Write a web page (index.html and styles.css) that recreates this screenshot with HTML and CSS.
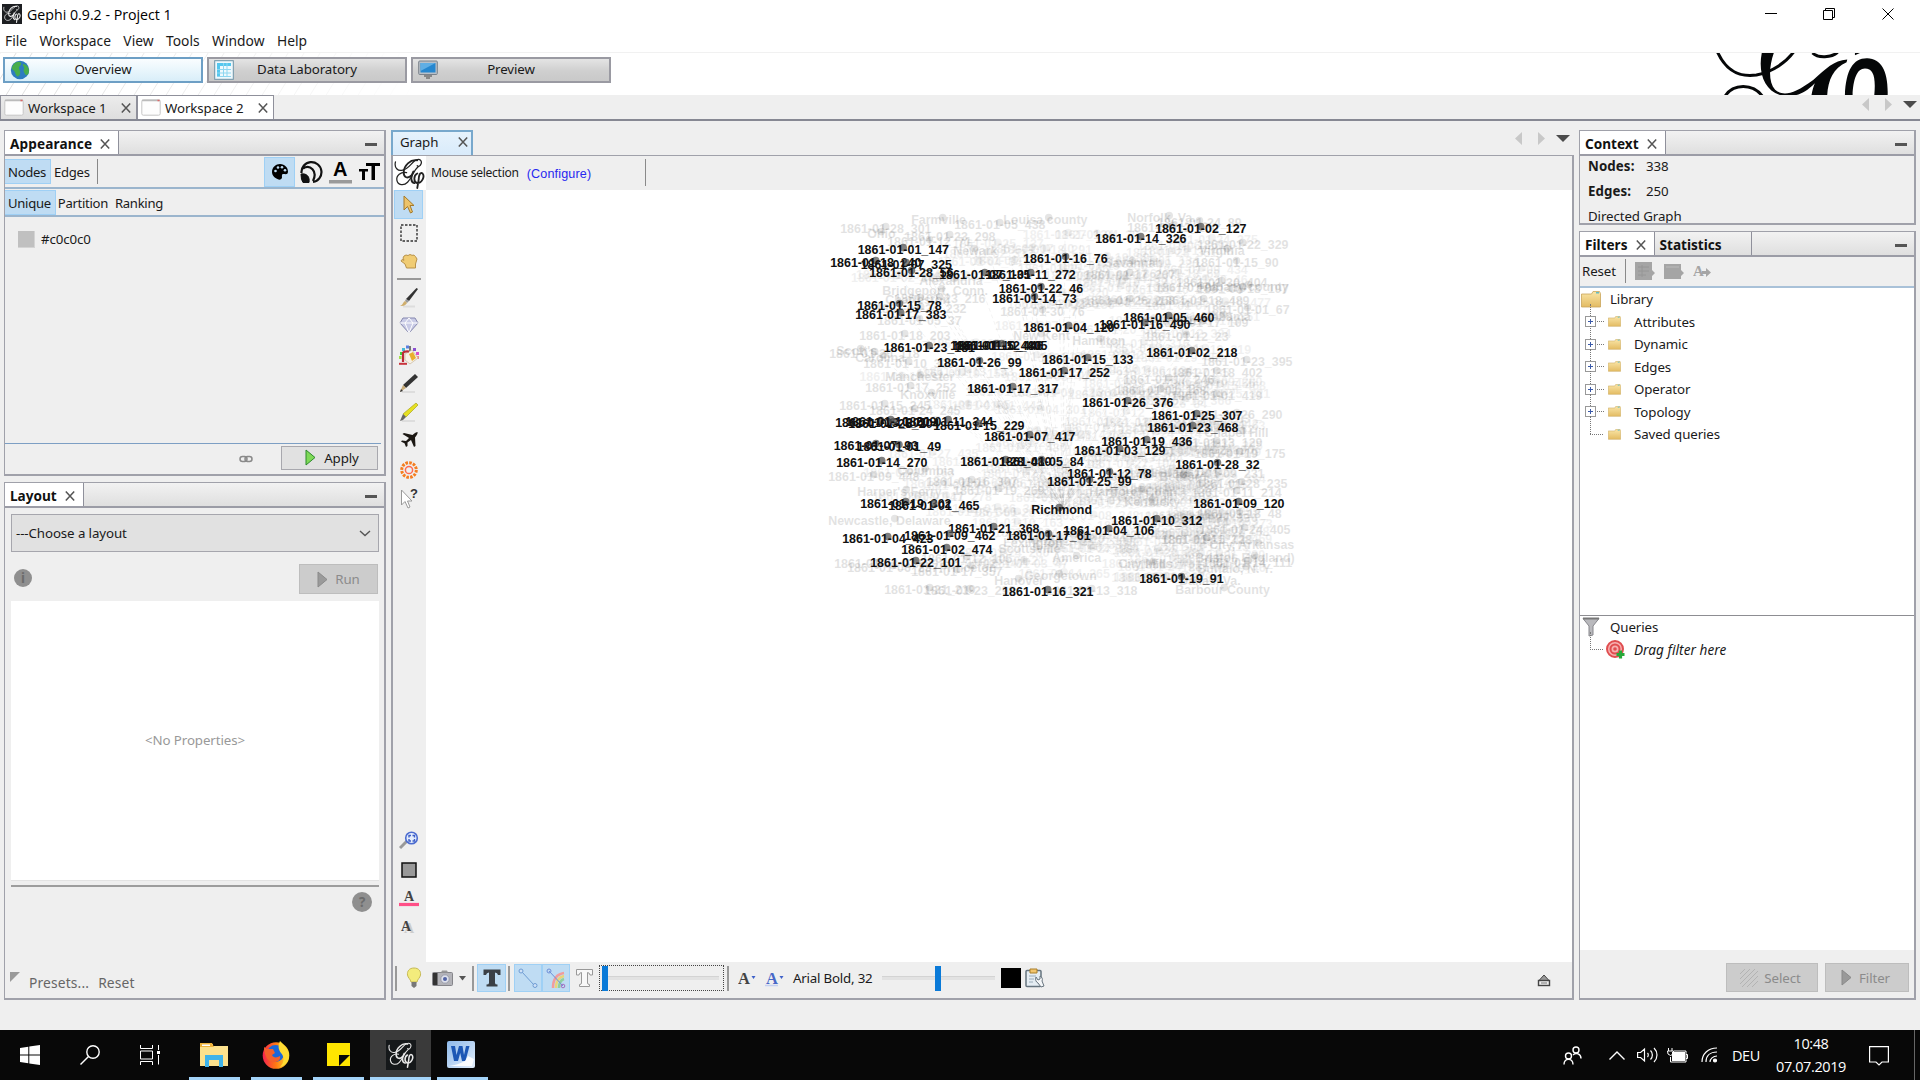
FILE: index.html
```html
<!DOCTYPE html>
<html lang="en">
<head>
<meta charset="utf-8">
<title>Gephi 0.9.2 - Project 1</title>
<link rel="stylesheet" href="styles.css">
</head>
<body>
<svg class="defs" aria-hidden="true">
  <defs>
    <linearGradient id="gold" x1="0" y1="0" x2="0" y2="1"><stop offset="0" stop-color="#fae6a8"/><stop offset="1" stop-color="#e3bb62"/></linearGradient>
    <linearGradient id="ff" x1="0" y1="0" x2="1" y2="0"><stop offset="0" stop-color="#f5214f"/><stop offset=".5" stop-color="#ff7a12"/><stop offset="1" stop-color="#ffe030"/></linearGradient>
    <linearGradient id="word" x1="0" y1="0" x2="1" y2="1"><stop offset="0" stop-color="#8db9ea"/><stop offset="1" stop-color="#e4effb"/></linearGradient>
    <symbol id="gephi" viewBox="0 0 32 32">
      <g fill="none" stroke="currentColor" stroke-linecap="round">
        <path stroke-width="1.3" d="M1.500 4C0 10 4 14 9 12.500C16 11 18 4 23 2C27 .5 29 3 28 6C27 9 25 9 24 8"/>
        <path stroke-width="1.9" d="M24 2.500C17 1 10 8 10 15C10 20 14 22 18 18"/>
        <path stroke-width="1.3" d="M13 15C7 14 2 18 3 23C4 28 10 29 14 25C19 20 20 13 25 9"/>
        <path stroke-width="1.900" d="M20 14C17 19 17 25 21 26"/>
        <path stroke-width="1.900" d="M24 16C20 18 20 25 24 26C29 26 32 19 29.500 16C27 14 25.500 18 25.500 22L24 31"/>
      </g>
    </symbol>
    <symbol id="close" viewBox="0 0 10 10"><path d="M.8.5 9.2 9.5M9.2.5.8 9.5" stroke="#555" stroke-width="1.5"/></symbol>
    <symbol id="folder" viewBox="0 0 20 17"><path d="M.5 3h10l1.500-2.500h6.500l1 2V16H.5z" fill="url(#gold)" stroke="#c9a55a" stroke-width=".8"/><path d="M15 1.800h3" stroke="#4bb5c9" stroke-width="1.300"/></symbol>
    <symbol id="win" viewBox="0 0 20 17"><rect x=".8" y=".8" width="18.400" height="15.400" rx="1.500" fill="#fdfdfd" stroke="#c6c6c6"/><path d="M1 1.500h18" stroke="#bbb" stroke-width="1.500"/><path d="M16.500 1.500h2" stroke="#d66" stroke-width="1.500"/></symbol>
    <symbol id="play" viewBox="0 0 11 17"><path d="M1 1 10 8.500 1 16z"/></symbol>
  </defs>
</svg>

<header class="titlebar">
  <span class="app-icon"><svg width="18" height="18"><use href="#gephi"/></svg></span>
  <span class="title">Gephi 0.9.2 - Project 1</span>
  <svg class="winctl" width="132" height="14" viewBox="0 0 132 14" fill="none" stroke="#000"><path d="M0 5.500h12M58.500 2.500h9v9h-9zM60.500 2.500v-2h9v9h-2M117.500.5l11 11M128.500.5l-11 11"/></svg>
</header>
<nav class="menu"><span>File</span><span>Workspace</span><span>View</span><span>Tools</span><span>Window</span><span>Help</span></nav>
<div class="banner">
  <svg class="hatch" width="420" height="42"><defs><pattern id="h" width="16" height="26" patternUnits="userSpaceOnUse"><path d="M-2 29 18-3M-10 16 2-3M14 29 18 23" stroke="#dedede" fill="none"/></pattern><linearGradient id="fade"><stop offset="0" stop-color="#fff" stop-opacity="0"/><stop offset="1" stop-color="#fff"/></linearGradient></defs><rect width="420" height="42" fill="url(#h)"/><rect width="420" height="42" fill="url(#fade)"/></svg>
  <div class="modes">
    <div class="mode on"><svg width="20" height="20" viewBox="0 0 20 20"><circle cx="10" cy="10" r="9.200" fill="#2e7cc0"/><path d="M3 5c3-4 7-4 8-2s-2 3-2 5 2 3 1 6-3 3-4 1-1-4-3-5-1-3 0-5zM13 4c3 0 6 3 6 7s-3 5-4 3-2-3-1-5-2-3-1-5z" fill="#48ad4d"/></svg><b>Overview</b></div>
    <div class="mode"><svg width="20" height="20" viewBox="0 0 20 20"><rect x=".7" y=".7" width="18.600" height="18.600" fill="#eef9fd" stroke="#6e93a5"/><path d="M3 3h14v3H3zM3 6h3v11H3z" fill="#54c7ee"/><path d="M3 9.500h14M3 13h14M3 16.500h14M9.500 3v14M13 3v14" stroke="#8dd6f0"/></svg><b>Data Laboratory</b></div>
    <div class="mode"><svg width="20" height="20" viewBox="0 0 20 20"><rect x=".7" y="1" width="18.600" height="13.500" rx="1" fill="#b9c0c8" stroke="#7a828b"/><rect x="2.500" y="3" width="15" height="9.500" fill="#2687cf"/><path d="M2.500 3h15l-15 8z" fill="#60aee4"/><path d="M6 15h8v2h-2v2H8v-2H6z" fill="#888"/></svg><b>Preview</b></div>
  </div>
  <svg class="brand" width="177" height="43" viewBox="520 158 530 128" preserveAspectRatio="none" fill="#050708"><g fill="none" stroke="#050708" stroke-width="9"><path d="M533 154C560 215 600 232 650 225C700 215 740 185 762 154M556 290C580 250 640 250 668 290M818 158C835 175 875 172 893 156"/></g><path d="M666 158H702C688 200 685 245 706 270C730 290 760 285 820 240C860 205 880 182 922 178L920 186C880 204 865 240 862 286H815C818 270 820 262 825 250C790 285 765 292 735 286H720C672 270 655 215 666 158ZM945 158h15l-15 7zM915 286C918 210 940 173 982 174C1025 175 1045 215 1043 286H1003C1008 230 1000 205 975 205C950 205 940 240 938 286Z"/></svg>
</div>
<div class="wtabs">
  <div class="wtab"><svg width="20" height="17"><use href="#win"/></svg><span>Workspace 1</span><svg class="x" width="10" height="10"><use href="#close"/></svg></div>
  <div class="wtab on"><svg width="20" height="17"><use href="#win"/></svg><span>Workspace 2</span><svg class="x" width="10" height="10"><use href="#close"/></svg></div>
  <svg class="arrows" width="56" height="14" viewBox="0 0 56 14"><path d="M7 0v13L0 6.500zM23 0v13l7-6.500z" fill="#c8c8c8"/><path d="M41 3h14l-7 7z" fill="#4b4b4b"/></svg>
</div>

<main class="desk">
  <div class="left">
    <section class="panel appearance">
      <div class="ptitle"><div class="ptab wide">Appearance<svg width="10" height="10"><use href="#close"/></svg></div><i></i></div>
      <div class="arow first"><span class="sel">Nodes</span><span>Edges</span><em></em>
        <div class="aicons">
          <span class="sel"><svg width="18" height="18" viewBox="0 0 18 18"><path d="M9 1C14 1 17 5 17 8.500S14.500 11 12.500 11 11 13 11 14.500 9 17 7.500 16.500C3 15 1 12 1 9 1 4 5 1 9 1z"/><g fill="#bfdcf3"><circle cx="4.500" cy="8" r="1.300"/><circle cx="7" cy="4.500" r="1.300"/><circle cx="11" cy="4.300" r="1.300"/><circle cx="14" cy="7.300" r="1.300"/></g></svg></span>
          <svg width="24" height="24" viewBox="0 0 24 24" fill="none" stroke="#111"><path stroke-width="2.200" d="M2.500 13A10 10 0 1 1 14 22M4 8.500C11 4 19 11 14 21"/><path d="M2 14c6-1 9 3 8 8.500H4Q2 20 2 14z" fill="#111"/></svg>
          <svg width="24" height="24" viewBox="0 0 24 24"><text x="4" y="16" font-size="20" font-weight="700">A</text><path d="M0 20h23v3.500H0z" fill="#9a9a9a"/></svg>
          <svg width="22" height="20" viewBox="0 0 22 20"><path d="M0 7h9v2.600H6V18H3V9.600H0zM7 1h14v3h-5v14h-3.500V4H7z"/></svg>
        </div>
      </div>
      <div class="arow second"><span class="sel">Unique</span><span>Partition</span><span>Ranking</span></div>
      <div class="swatch"><i></i>#c0c0c0</div>
      <div class="applybar"><svg width="14" height="8" viewBox="0 0 14 8" fill="none" stroke="#8a8a8a" stroke-width="1.500"><rect x="1" y="1.500" width="7" height="5" rx="2.500"/><rect x="6" y="1.500" width="7" height="5" rx="2.500"/></svg><div class="btn apply"><svg width="11" height="17" fill="#7ed957" stroke="#2b8a2b"><use href="#play"/></svg>Apply</div></div>
    </section>
    <section class="panel layout">
      <div class="ptitle"><div class="ptab">Layout<svg width="10" height="10"><use href="#close"/></svg></div><i></i></div>
      <div class="combo">---Choose a layout<svg width="12" height="7" fill="none" stroke="#555" stroke-width="1.400"><path d="M1 1l5 4.500L11 1"/></svg></div>
      <div class="runrow"><span class="round">i</span><div class="btn off run"><svg width="11" height="17" fill="#9a9a9a" stroke="#8a8a8a"><use href="#play"/></svg>Run</div></div>
      <div class="props">&lt;No Properties&gt;</div>
      <div class="helprow"><span class="round big">?</span></div>
      <div class="presets"><svg width="10" height="10"><path d="M0 0h10L0 10z" fill="#999"/></svg><span>Presets...</span><span>Reset</span></div>
    </section>
  </div>

  <section class="graph">
    <div class="gtabs"><div class="gtab">Graph<svg width="10" height="10"><use href="#close"/></svg></div><svg class="arrows" width="56" height="14" viewBox="0 0 56 14"><path d="M7 0v13L0 6.500zM23 0v13l7-6.500z" fill="#c8c8c8"/><path d="M41 3h14l-7 7z" fill="#4b4b4b"/></svg></div>
    <div class="gbody">
      <div class="gtop"><span class="glogo"><svg width="31" height="31"><use href="#gephi"/></svg></span><span class="ms">Mouse selection</span><span class="conf">(Configure)</span><em></em></div>
      <div class="tools">
        <div class="t selt"><svg width="14" height="19" viewBox="0 0 14 19"><path d="M2 1v14l3.500-3.500L8.500 18l2-1L8 10.500h4z" fill="#ecc36a" stroke="#a57a2a"/></svg></div>
        <div class="t"><svg width="18" height="18"><rect x="1" y="1" width="16" height="16" fill="none" stroke="#333" stroke-width="1.400" stroke-dasharray="2.500 1.500"/></svg></div>
        <div class="t"><svg width="18" height="15" viewBox="0 0 18 15"><path d="M3 4l1-2 2-1 2 .5 2-1 2 .8 2-.2 1.500 1.500L17 5l-1.500 5v4h-9L5 10 1 7l1-1.500 2 .8z" fill="#f0cc74" stroke="#b8924a"/></svg></div>
        <hr>
        <div class="t"><svg width="20" height="21" viewBox="0 0 20 21"><path d="M4 19.500h12" stroke="#ddd" stroke-width="2"/><path d="M17.500 1 19 2 10 14 7 12z" fill="#333"/><path d="M7 12l3 2-2 2-2-2z" fill="#999"/><path d="M6 14l2 2c-2 3-4 3-7 3 3-1 3-4 5-5z" fill="#cfae6d"/></svg></div>
        <div class="t"><svg width="20" height="18" viewBox="0 0 20 18"><path d="M4 1h12l3 5-9 10L1 6z" fill="#c9cbe6" stroke="#8587ae"/><path d="M1 6h18M6 6l4 10 4-10-4-5z" fill="none" stroke="#fff"/></svg></div>
        <div class="t"><svg width="20" height="20" viewBox="0 0 20 20"><g stroke="none"><rect x="1" y="7" width="3" height="3" fill="#3fd23f"/><rect x="3" y="3" width="3" height="3" fill="#46b9d8"/><rect x="7" y=".5" width="3" height="3" fill="#5a7fe0"/><rect x="14" y="3" width="3" height="3" fill="#8a4fd0"/><rect x="17" y="7" width="3" height="3" fill="#d94fc8"/><rect x="17" y="11" width="3" height="3" fill="#f08a8a"/><rect x="0" y="11" width="2.500" height="3" fill="#a6e04a"/></g><path d="M11 1v6" stroke="#777" stroke-width="2"/><path d="M6 9l7-4 6 8-8 6-5-4z" fill="#f7f1e6" stroke="#c9b79b" stroke-width=".7"/><path d="M10 9l4-2 3 6-4 3z" fill="#e9ae2e"/><path d="M4 17V8q1-2 6-1.500" stroke="#bb2b36" stroke-width="2.200" fill="none"/><path d="M0 18.800h8" stroke="#c8343c" stroke-width="2"/></svg></div>
        <div class="t"><svg width="20" height="20" viewBox="0 0 20 20"><path d="M3 19h13" stroke="#ddd" stroke-width="2"/><path d="M16 1l3 3L7 15l-3-3z" fill="#333"/><path d="M4 12l3 3-6 4z" fill="#c8ab76"/><path d="M1 19l1-3 2 2z" fill="#333"/></svg></div>
        <div class="t"><svg width="20" height="20" viewBox="0 0 20 20"><path d="M3 19h13" stroke="#ddd" stroke-width="2"/><path d="M17 1l2 2L7 15l-3-3z" fill="#e6e022" stroke="#a9a51f" stroke-width=".7"/><path d="M4 12l3 3-3 3-3 1z" fill="#666"/></svg></div>
        <div class="t"><svg width="18" height="17" viewBox="0 0 18 17"><path d="M17.500 0c-1 0-3 1-5 3L4 1 2.500 2 9 6 6 9 2 8.500 1 9.500l3.500 1.700L6 15l1.500-1V10.500L11 8l3 7 1.500-1L15 5.500C17 3 18 1 17.500 0z" fill="#1b1713"/></svg></div>
        <div class="t"><svg width="18" height="18" viewBox="0 0 18 18" fill="none"><circle cx="9" cy="9" r="7.300" stroke="#f57d20" stroke-width="3" stroke-dasharray="2.600 1.220"/><circle cx="9" cy="9" r="3.600" stroke="#ff6a50" stroke-width="1.500"/></svg></div>
        <div class="t"><svg width="18" height="21" viewBox="0 0 18 21"><path d="M1.500 2v15l3.500-3.500L8 20l2-1-2.500-6H12z" fill="#fff" stroke="#999"/><text x="10" y="10" font-size="13" font-weight="700" fill="#333">?</text></svg></div>
        <div class="gap"></div>
        <div class="t"><svg width="20" height="19" viewBox="0 0 20 19"><path d="M1 17l7-7" stroke="#999" stroke-width="3"/><circle cx="12.500" cy="7" r="5.800" fill="#e4edfb" stroke="#4c6cd0" stroke-width="1.600"/><path d="M10 6.500V4.500h2M13.500 4.500h2v2M15.500 8v2h-2M12 10h-2V8" fill="none" stroke="#3d5ec9" stroke-width="1.400"/></svg></div>
        <div class="t"><svg width="16" height="16"><rect x="1" y="1" width="14" height="14" fill="#999" stroke="#111" stroke-width="1.500"/></svg></div>
        <div class="t"><svg width="20" height="18" viewBox="0 0 20 18"><text class="serif" x="5" y="11.500" font-size="14" font-weight="700" fill="#444">A</text><path d="M0 15.500h20" stroke="#ff4f87" stroke-width="3.200"/></svg></div>
        <div class="t"><svg width="20" height="16" viewBox="0 0 20 16"><text class="serif" x="5" y="13.500" font-size="14" font-weight="700" fill="#ccc">A</text><text class="serif" x="2" y="12" font-size="14" font-weight="700" fill="#444">A</text></svg></div>
      </div>
      <svg class="canvas" id="canvas" width="1146" height="772" viewBox="426 190 1146 772"></svg>
      <div class="gbot">
        <em></em>
        <svg class="bulb" width="16" height="22" viewBox="0 0 16 22"><path d="M8 1C3 1 1 4.500 1.500 8c.5 3 3 4 3.500 7h6c.5-3 3-4 3.500-7C15 4.500 13 1 8 1z" fill="#f3ec7c" stroke="#c6b955"/><path d="M5.500 15h5v4L8 21l-2.500-2z" fill="#777"/></svg>
        <svg class="cam" width="21" height="16" viewBox="0 0 21 16"><rect x=".5" y="2.500" width="20" height="13" rx="1" fill="#b3b3b8" stroke="#85858a"/><rect x="1" y="3" width="4.500" height="12" fill="#333"/><path d="M9 2.500l1-2h5l1 2" fill="#999"/><circle cx="13" cy="9" r="4.200" fill="#dfe2ec" stroke="#9a9dab"/><circle cx="13" cy="9" r="2" fill="#5263a5"/></svg>
        <svg class="dd" width="7" height="5"><path d="M0 0h7L3.500 4.500z" fill="#555"/></svg>
        <em></em>
        <span class="tog t1"><svg width="20" height="20"><path d="M1.500 1.500h17V7H16q-.5-2.500-3-2.500V15q0 1.500 2.500 1.500v2h-11v-2Q7 16.500 7 15V4.500Q4.500 4.500 4 7H1.500z" fill="#3b4046"/></svg></span>
        <em></em>
        <span class="tog"><svg width="22" height="22" fill="#cfe1f7" stroke="#6f9cd3"><path d="M5 5l12 13"/><circle cx="4" cy="4" r="2"/><circle cx="18" cy="18.500" r="2"/></svg></span>
        <span class="tog t3"><svg width="22" height="22" fill="none"><path d="M8 21C8 12 12 7 19 6" stroke="#f19c9c" stroke-width="2.500"/><path d="M11 21c0-7 3-11 8-12" stroke="#e9d579" stroke-width="2.500"/><path d="M14 21c0-5 2-8 5-9" stroke="#8fd0a0" stroke-width="2.500"/><path d="M4 4l14 15" stroke="#6f8fd8"/><circle cx="4" cy="4" r="2" stroke="#6f8fd8"/><circle cx="18" cy="19" r="1.800" stroke="#a56fc0"/></svg></span>
        <svg class="to" width="19" height="20"><path d="M1.500 1.500h16V7H15q-.5-2.500-2.500-2.500V15q0 1.500 2 1.500v2h-10v-2q2 0 2-1.500V4.500Q4.500 4.500 4 7H1.500z" fill="#f8f8f8" stroke="#999"/></svg>
        <div class="slider dotted"><i></i><b></b></div>
        <em class="e4"></em>
        <svg class="a1" width="19" height="20"><text class="serif" x="0" y="16" font-size="16.500" font-weight="700" fill="#444">A</text><path d="M13.500 8h4L15.500 11z" fill="#3e61c8"/></svg>
        <svg class="a2" width="20" height="20"><text class="serif" x="1" y="16" font-size="16.500" font-weight="700" fill="#4767c7">A</text><path d="M0 17.500h13" stroke="#c3cff0" stroke-width="1.500"/><path d="M14.500 8h4L16.500 11z" fill="#3e61c8"/></svg>
        <span class="fontname">Arial Bold, 32</span>
        <div class="slider s2"><i></i><b></b></div>
        <i class="black"></i>
        <svg class="clip" width="20" height="20" viewBox="0 0 20 20"><rect x="1" y="2.500" width="15" height="16" rx="1" fill="#e5edf3" stroke="#66747f" stroke-width="1.500"/><path d="M5 1h7v4H5z" fill="#f2c56d" stroke="#a97f2b"/><path d="M4 8h7M4 11h5M4 14h4" stroke="#9aacba"/><path d="M11 9c-1 3 0 5 2 6l3 4 3-1-2-5c1-2 0-4-2-5v3l-2 1z" fill="#f4f6f8" stroke="#67747e"/></svg>
        <svg class="eject" width="14" height="13" viewBox="0 0 14 13"><path d="M2 6.500L7 1l5 5.500z" fill="#999" stroke="#444"/><rect x="1.500" y="6.500" width="11" height="5" fill="#eee" stroke="#444" stroke-width="1.400"/><path d="M4 9h6" stroke="#777"/></svg>
      </div>
    </div>
  </section>

  <div class="right">
    <section class="panel context">
      <div class="ptitle"><div class="ptab">Context<svg width="10" height="10"><use href="#close"/></svg></div><i></i></div>
      <dl><div><dt>Nodes:</dt><dd>338</dd></div><div><dt>Edges:</dt><dd>250</dd></div><div>Directed Graph</div></dl>
    </section>
    <section class="panel filters">
      <div class="ptitle"><div class="ptab">Filters<svg width="10" height="10"><use href="#close"/></svg></div><div class="ptab stat">Statistics</div><i></i></div>
      <div class="ftools"><span>Reset</span><em></em>
        <svg width="20" height="19"><path d="M0 0h17v8l3 3-3 3v4H0z" fill="#a5a5a5"/><path d="M3 5h11M3 9h11M3 13h8M7 3v12" stroke="#969696"/></svg>
        <svg width="20" height="17"><path d="M0 1h17v6l3 3-3 3v3H0z" fill="#a5a5a5"/><path d="M2 4h13" stroke="#bbb"/></svg>
        <svg width="19" height="17"><text class="serif" x="0" y="13" font-size="15" font-weight="700" fill="#a5a5a5">A</text><path d="M9 8h4V5l5 4.500L13 14v-3H9z" fill="#a5a5a5"/></svg>
      </div>
      <div class="tree">
        <div class="root"><svg width="20" height="17"><use href="#folder"/></svg>Library</div>
        <div class="node"><i class="plus"></i><svg width="13" height="11"><use href="#folder"/></svg>Attributes</div>
        <div class="node"><i class="plus"></i><svg width="13" height="11"><use href="#folder"/></svg>Dynamic</div>
        <div class="node"><i class="plus"></i><svg width="13" height="11"><use href="#folder"/></svg>Edges</div>
        <div class="node"><i class="plus"></i><svg width="13" height="11"><use href="#folder"/></svg>Operator</div>
        <div class="node"><i class="plus"></i><svg width="13" height="11"><use href="#folder"/></svg>Topology</div>
        <div class="node last"><i></i><svg width="13" height="11"><use href="#folder"/></svg>Saved queries</div>
      </div>
      <div class="queries">
        <div class="root q"><svg width="18" height="20" viewBox="0 0 18 20"><path d="M1 1.500h16L11 9v9l-4 1V9z" fill="#b9b9bd" stroke="#87878c"/><path d="M1 1.500h16" stroke="#777" stroke-width="2"/></svg>Queries</div>
        <div class="node last drag"><i></i><svg width="20" height="20" viewBox="0 0 20 20"><g fill="none" stroke="#e04e50" stroke-width="2"><circle cx="9" cy="9" r="8" fill="#f7b1b1"/><circle cx="9" cy="9" r="4.500"/></g><circle cx="9" cy="9" r="1.800" fill="#e04e50"/><path d="M14.500 10.500v8M10.500 14.500h8" stroke="#27a83a" stroke-width="3.200"/></svg>Drag filter here</div>
      </div>
      <div class="fbot"><div class="btn off selbtn"><svg width="18" height="18"><path d="M0 5l5-5M0 10L10 0M0 15L15 0M2 18L18 2M7 18L18 7M12 18l6-6" stroke="#b3b3b3"/></svg>Select</div><div class="btn off filbtn"><svg width="11" height="17" fill="#999" stroke="#8a8a8a"><use href="#play"/></svg>Filter</div></div>
    </section>
  </div>
</main>

<footer class="taskbar">
  <div class="app w"><svg width="20" height="20" fill="#fff"><path d="M0 3l8.300-1.200v7.700H0zM9.300 1.600L20 0v9.500H9.300zM0 10.500h8.300v7.700L0 17zM9.300 10.500H20V20L9.300 18.400z"/></svg></div>
  <div class="app"><svg width="20" height="20" fill="none" stroke="#fff" stroke-width="1.400"><circle cx="13" cy="7" r="6.200"/><path d="M8.500 11.500L.5 19.500"/></svg></div>
  <div class="app"><svg width="20" height="20" fill="none" stroke="#fff"><path d="M.5 0v3.500h12V0M.5 20v-3.500h12V20M.5 6h12v8H.5zM18.500 0v5M18.500 10v9.500"/><path d="M17 6h3v3h-3z" fill="#fff" stroke="none"/></svg></div>
  <div class="app run1"><svg width="28" height="24"><path d="M0 1h13v2h15v20H0z" fill="#fce18d"/><path d="M0 0h12l2 4H0z" fill="#efb33b"/><path d="M2 1.500h8v1.500H2z" fill="#fff"/><path d="M5 24V12h18v12h-4v-7H9v7z" fill="#3fb3ea"/></svg></div>
  <div class="app run1"><svg width="28" height="28"><circle cx="14" cy="14.500" r="13.300" fill="url(#ff)"/><circle cx="13.500" cy="12.500" r="8.500" fill="#1a67d8"/><path d="M2 6l3 2 6 0 2 4-3 2c1 3 5 3 8 1 1 5-4 7-8 6-5-1-8-8-8-15z" fill="#f4602a"/><path d="M18 0c4 4 9 8 9 15 0 6-5 10-9 11 5-5 4-11 1-14-3-4-3-8-1-12z" fill="#ffdc33"/></svg></div>
  <div class="app run1"><svg width="23" height="23"><path d="M0 0h23v12H12v11H0z" fill="#ffe500"/><path d="M12 23l11-11v11z" fill="#ffe500"/></svg></div>
  <div class="app run1 act"><span class="gicon"><svg width="26" height="26"><use href="#gephi"/></svg></span></div>
  <div class="app run1 wd"><svg width="28" height="27"><rect width="28" height="27" rx="2" fill="url(#word)"/><path d="M4 5h4l1.500 9L12 5h3.500l1.500 9 2-9h3.500L18.500 20H15l-1.800-8L11 20H7z" fill="#1d58b5"/><path d="M2 25q9-1 16-5l3-5 6 3-2 7z" fill="#fff" opacity=".9"/></svg></div>
  <div class="tray">
    <svg class="ppl" width="19" height="19" fill="none" stroke="#fff" stroke-width="1.400"><circle cx="13" cy="4" r="3"/><circle cx="5.500" cy="10" r="3"/><path d="M1 18.500c0-7 9-7 9 0M10 9c3-3 8-1 8 3.500"/></svg>
    <svg class="chev" width="16" height="9" fill="none" stroke="#fff" stroke-width="1.400"><path d="M.5 8.500L8 1l7.500 7.500"/></svg>
    <svg class="vol" width="21" height="16" fill="none" stroke="#fff" stroke-width="1.200"><path d="M.6 5.500h3L7.500 2v12L3.600 10.500h-3zM10.500 6c1 1 1 3 0 4M13.500 3.500c2.500 2.500 2.500 6.500 0 9M17 1c4 4 4 10 0 14"/></svg>
    <svg class="bat" width="21" height="15"><path d="M5 4h13v9H5z" fill="#fff"/><path d="M7 3h12v11H3.500V9M19 6.500h1.500v4H19M1.500 0v3M5 0v3M.5 3h6v3L3.500 7.500 1 6z" fill="none" stroke="#fff"/></svg>
    <svg class="wifi" width="17" height="16" fill="none" stroke="#fff" stroke-width="1.200"><path d="M1 15C1 7 7 1 16 1M5 15C5 9 9 5 16 5M9 15c0-3 3-6 7-6" /><circle cx="14" cy="13.500" r="1.500" fill="#fff"/></svg>
    <span class="deu">DEU</span>
    <span class="clock">10:48<br>07.07.2019</span>
    <svg class="note" width="20" height="20" fill="none" stroke="#fff" stroke-width="1.200"><path d="M.6.600h18.800v15.400H13l-3 3-3-3H.6z"/></svg>
    <em></em>
  </div>
</footer>
<script src="graph.js"></script>
</body>
</html>
```

FILE: graph.js
```js
// Node labels: [text, left x, baseline y]. A short text such as "01_147" is a January 1861 date.
const strong = [
  ["01_147",858.5,253],["18_240",831,266],["07_325",861.5,268],["28_56",870,276],["07_135",940,278],
  ["11_272",986,278],["22_46",999.5,292],["14_73",993,302],["15_78",858,309],["17_383",856,318],
  ["23_181",884.5,351],["15_480",951,349],["10_446",953,349],["12_405",957,349],["26_99",938,366],
  ["17_317",968,392],["16_76",1024,262],["04_120",1024,331],["02_127",1156,232],["14_326",1096,242],
  ["05_460",1124,321],["16_490",1100,328],["02_218",1147,356],["15_133",1043,363],["17_252",1019.5,376],
  ["26_376",1083,406],["13_201",836,426],["25_204",849,427],["10_209",846,425],["11_344",903.5,425],
  ["15_229",934,429],["07_417",985,440],["07_93",834.5,449],["01_49",857.5,450],["14_270",837,466],
  ["28_480",961,465],["05_84",1000,465],["19_302",861,507],["01_465",889,509],["Richmond",1032,513],
  ["21_368",949,532],["09_462",905,539],["17_61",1007,539],["04_423",843,542],["02_474",902,553],
  ["22_101",871,566],["16_321",1003,595],["25_307",1152,419],["23_468",1148,431],["19_436",1102,445],
  ["03_129",1075,454],["28_32",1176,468],["12_78",1068,477],["25_99",1048,485],["09_120",1194,507],
  ["10_312",1112,524],["04_106",1064,534],["19_91",1140,582]
];
const faint = [
  ["Farmville",912,223],["28_301",841,232],["Ohio",868,237],["05_438",955,228],["Louisa county",1004,223],
  ["23_298",905,240],["12_71",888,245],["Newark",954,254],["Bridgeport, Conn.",883,294],["Charleston",886,303],
  ["23_216",895,302],["24_232",876,312],["05_37",878,324],["18_203",860,339],["Scott's",837,354],
  ["20_118",830,357],["Carolina",856,361],["10_303",864,367],["Manchester",886,380],["17_252",866,391],
  ["Knoxville",901,398],["New Kent",1014,339],["Alexandria",920,284],["30_76",1001,315],["Norfolk, Va.",1128,221],
  ["24_89",1158,226],["12_150",1128,231],["22_329",1198,248],["Virginia",1200,254],["15_90",1195,266],
  ["Savannah",1105,266],["30_404",1177,286],["18_197",1198,292],["Albany county",1204,290],["17_207",1085,278],
  ["04_150",1156,291],["18_489",1159,304],["26_258",1085,304],["01_67",1206,313],["17_109",1158,326],
  ["12_23",1145,340],["23_395",1202,365],["18_402",1172,376],["17_246",1124,383],["01_168",1116,394],
  ["01_419",1172,399],["Alabama",1200,320],["Hamilton",1073,344],["Harper's Ferry",858,495],["09_448",829,480],
  ["Newcastle, Delaware",829,524],["16_307",927,485],["19_269",954,494],["12_105",922,562],["03_185",835,567],
  ["17_357",912,575],["Hanover",995,584],["Georgetown",1025,579],["21_219",885,593],["23_298",925,594],
  ["Scottsville",999,552],["Lexington",1004,546],["06_257",848,571],["Princeton",940,571],["15_245",840,409],
  ["24_245",870,414],["Columbia",898,474],["26_290",1192,418],["Chapel Hill",1205,436],["13_129",1172,446],
  ["19_175",1195,457],["09_231",1174,477],["28_235",1197,487],["Bedford",1160,480],["Hartford, Conn.",1090,495],
  ["11_214",1192,496],["18_48",1198,517],["24_405",1200,533],["11_128",1162,543],["City, Arkansas",1210,548],
  ["Bristol, England)",1196,561],["City Mills",1119,567],["Buffalo, N. Y.",1198,572],["Dallas, Va.",1180,584],
  ["Barbour County",1176,593],["America",1053,561],["14_111",1203,566],["13_318",1047,594],["Kentucky",1125,505]
];
const full = t => /^\d/.test(t) ? "1861-01-" + t : t;

// Background labels that pile up in the middle of the cloud.
let seed = 7;
const rnd = () => (seed = (seed * 16807) % 2147483647) / 2147483647;
const pile = [];
for (let i = 0; i < 190; i++) {
  const y = 238 + rnd() * 345;
  const d = String(1 + Math.floor(rnd() * 29)).padStart(2, "0");
  const x = 838 + Math.sqrt(rnd()) * 345;
  pile.push([d + "_" + Math.floor(30 + rnd() * 450), x, y]);
}

const out = [];
for (let i = 0; i < 70; i++) {
  const y1 = 240 + rnd() * 330, x1 = 890 + rnd() * 340;
  out.push(`<path class="edge" d="M${x1} ${y1}L1063 509"/>`);
}
const put = (list, cls) => list.forEach(([t, x0, y0]) => {
  const s = full(t), x = x0 - .8, y = y0 + .6;
  const w = s.startsWith("1861") ? s.length * 6.5 : s.length * 7;
  out.push(`<circle class="${cls}-dot" cx="${x + w / 2}" cy="${y - 6}" r="3.8"/>`);
  out.push(`<text class="${cls}" x="${x}" y="${y}">${s}</text>`);
});
put(pile, "pile");
put(faint, "faint");
put(strong, "strong");
document.getElementById("canvas").innerHTML = out.join("");
```

FILE: styles.css
```css
* { box-sizing: border-box; }
body { margin: 0; width: 1920px; height: 1080px; overflow: hidden; display: flex; flex-direction: column; background: #efefef; color: #1a1a1a; font: 13.3px/18px "Noto Sans", sans-serif; letter-spacing: -.1px; white-space: nowrap; }
svg { display: block; flex: none; }
i, em, b { font-style: normal; font-weight: 400; }
.defs { position: absolute; width: 0; height: 0; }
svg text { font-family: "Liberation Sans", sans-serif; letter-spacing: 0; }
svg text.serif { font-family: "Liberation Serif", serif; }

.titlebar { height: 30px; background: #fff; display: flex; align-items: center; padding-left: 2px; color: #000; font: 14.2px/20px "Open Sans", sans-serif; letter-spacing: 0; }
.app-icon { width: 20px; height: 20px; background: #1d1f22; color: #eee; display: grid; place-items: center; margin: -2px 5px 0 0; }
.title { margin-top: -1px; }
.winctl { margin: -1px 23px 0 auto; }
.menu { height: 23px; background: #fff; border-bottom: 1px solid #f1f1f1; display: flex; gap: 12.4px; padding: 2px 0 0 5px; font-size: 13.8px; letter-spacing: .02px; }
.banner { height: 42px; background: #fff; display: flex; align-items: flex-start; position: relative; }
.hatch { position: absolute; left: 0; top: 0; }
.modes { display: flex; gap: 4px; padding: 4px 0 0 3px; position: relative; }
.mode { width: 200px; height: 26px; border: 2px solid #9a9aa2; background: linear-gradient(#e4e4e4, #cfcfcf 55%, #c9c9c9); display: flex; align-items: center; padding-left: 5px; }
.mode.on { border-color: #6d9fc5; background: linear-gradient(#fafdff, #e9f6fc 50%, #d9eef9); }
.mode b { flex: 1; text-align: center; padding: 0 25px 2px 0; }
.brand { margin: 0 30px 0 auto; height: 42px; }
.wtabs { height: 26px; border-bottom: 2px solid #868893; display: flex; align-items: flex-end; background: #efefef; }
.wtab { width: 137px; height: 24px; border: 1px solid #8f909b; border-bottom: 0; background: linear-gradient(#ececec, #dedede); display: flex; align-items: center; padding-left: 3px; }
.wtab.on { background: #fff; height: 24px; }
.wtab span { margin-left: 4px; flex: 1; }
.wtab .x { margin-right: 5px; }
.wtabs .arrows { margin: 0 2px 7px auto; }

.desk { height: 909px; padding: 9px 4px 30px; display: grid; grid-template-columns: 382px 1183px 337px; column-gap: 5px; }
.left, .right { display: flex; flex-direction: column; gap: 6px; min-height: 0; }
.panel { border: 2px solid #a0a1aa; border-width: 1px 2px 2px 1px; display: flex; flex-direction: column; background: #efefef; overflow: hidden; }
.ptitle { height: 25px; flex: none; border-bottom: 2px solid #9b9ca6; background: linear-gradient(#f2f2f2, #dfdfdf); display: flex; align-items: stretch; }
.ptab { background: #fff; border-right: 1px solid #8f909b; font-weight: 700; font-size: 13.6px; display: flex; align-items: center; gap: 8px; padding: 2px 8px 0 5px; color: #111; letter-spacing: 0; }
.ptab.wide { letter-spacing: .15px; }
.ptab.stat { background: none; width: 97px; }
.ptitle > i { width: 12px; height: 3px; background: #555; margin: 12px 7px 0 auto; }
.sel { background: #bfdcf3; outline: 1px solid #9fd0f5; }

.appearance { height: 346px; }
.arow { display: flex; align-items: center; border-bottom: 2px solid #9bb5cd; flex: none; font-size: 13.1px; letter-spacing: -.3px; }
.arow > span { padding: 1px 4px 0 3px; height: 23px; line-height: 23px; margin-right: 1px; }
.first { height: 33px; }
.first em { height: 25px; border-left: 1px solid #888; margin-left: 2px; }
.second { height: 28px; }
.second > span { margin-right: 0; }
.aicons { margin-left: auto; display: flex; align-items: center; gap: 6px; padding-right: 3px; }
.aicons .sel { width: 29px; height: 28px; display: grid; place-items: center; margin-right: -1px; }
.swatch { display: flex; align-items: center; gap: 6px; padding: 13px 0 0 13px; }
.swatch i { width: 17px; height: 17px; background: #c0c0c0; border: 1px solid #d4d4d4; border-width: 0 1px 1px 0; }
.applybar { margin-top: auto; height: 31px; border-top: 1px solid #7d9fc4; margin-right: 3px; display: flex; align-items: center; justify-content: flex-end; gap: 28px; padding-right: 3px; }
.btn { border: 1px solid #a8a8ae; background: #e1e1e1; display: flex; align-items: center; justify-content: center; }
.btn.off { background: #ccc; border-color: #bdbdbd; color: #8b8b8b; }
.apply { width: 97px; height: 24px; gap: 8px; padding-left: 5px; margin-top: -3px; }
.layout { height: 518px; }
.combo { margin: 6px 5px 0 6px; height: 38px; border: 1px solid #a6a6ad; background: #e1e1e1; display: flex; align-items: center; justify-content: space-between; padding: 0 7px 0 4px; flex: none; }
.runrow { display: flex; justify-content: space-between; height: 30px; margin: 12px 6px 1px 9px; flex: none; }
.run { width: 79px; gap: 7px; }
.round { width: 18px; height: 18px; border-radius: 50%; background: #8f8f8f; color: #6c6c6c; font-weight: 700; display: grid; place-items: center; margin-top: 5px; }
.round.big { width: 20px; height: 20px; margin: 0; }
.props { margin: 6px 5px 0 6px; height: 280px; flex: none; background: #fff; display: grid; place-items: center; color: #999; border-bottom: 1px solid #e3e3e3; padding-bottom: 2px; }
.helprow { margin: 4px 5px 0 6px; border-top: 2px solid #9d9d9d; padding: 5px 7px 0; display: flex; justify-content: flex-end; }
.presets { margin-top: auto; display: flex; gap: 9px; color: #666; padding: 0 0 6px 5px; font-size: 13.8px; letter-spacing: .15px; }
.presets svg { margin-top: -2px; }

.graph { display: flex; flex-direction: column; }
.gtabs { height: 25px; display: flex; justify-content: space-between; flex: none; }
.gtab { width: 82px; border: 2px solid #78a8cc; border-bottom: 0; background: linear-gradient(#e6f2fc, #d9ebfb); display: flex; align-items: center; justify-content: space-between; padding: 0 3px 3px 7px; }
.gtabs .arrows { margin: 2px 3px 0 0; }
.gbody { flex: 1; border: 2px solid #a0a1aa; border-width: 1px 2px 2px; display: grid; grid-template: 34px 772px 1fr / 33px 1fr; min-height: 0; }
.gtop { grid-column: 1 / 3; display: flex; align-items: center; }
.glogo { width: 33px; height: 34px; background: #fff; color: #222; display: grid; place-items: center; padding-right: 1px; }
.ms { margin-left: 5px; font-size: 12.1px; letter-spacing: -.3px; }
.conf { font: 12.6px "Liberation Sans", sans-serif; color: #2828f0; margin: 2px 0 0 8px; letter-spacing: .15px; }
.gtop em { border-left: 1px solid #8a8a8a; height: 27px; margin: -1px 0 0 54px; }
.tools { display: flex; flex-direction: column; align-items: center; padding-right: 2px; }
.t { height: 28.7px; width: 29px; display: grid; place-items: center; flex: none; }
.selt { background: #bfdcf3; outline: 1px solid #9fd0f5; outline-offset: -1px; }
.tools hr { width: 24px; margin: 2px 0 3px; border: 0; border-top: 2px solid #999; flex: none; }
.gap { height: 314px; flex: none; }
.canvas { background: #fff; }
.canvas text { font: 700 12.45px "Liberation Sans", sans-serif; }
.strong { fill: #111; }
.strong-dot { fill: #555; opacity: .75; }
.faint { fill: #000; opacity: .11; }
.faint-dot { fill: #000; opacity: .1; }
.pile { fill: #000; opacity: .055; }
.pile-dot { fill: #000; opacity: .05; }
.edge { stroke: #000; opacity: .07; stroke-width: .7; stroke-dasharray: 4 3; fill: none; }
.gbot { grid-column: 1 / 3; display: flex; align-items: center; padding: 0 0 4px 2px; }
.gbot em { border-left: 2px solid #999; height: 25px; flex: none; }
.bulb { margin: 0 10px 0 9px; }
.dd { margin: 0 6px 0 6px; }
.tog { width: 28px; height: 28px; background: #bfdcf3; outline: 1px solid #9fd0f5; outline-offset: -1px; display: grid; place-items: center; }
.t1 { margin: 0 2px 0 3px; width: 29px; }
.t1 + em { margin-right: 4px; }
.to { margin: 0 5px; }
.slider { width: 125px; height: 26px; display: flex; align-items: center; position: relative; flex: none; }
.slider i { flex: 1; height: 4px; background: #e2e2e2; border-top: 1px solid #d3d3d3; }
.slider b { position: absolute; left: 2px; width: 6px; height: 25px; background: #0a7ad8; }
.dotted { border: 1px dotted #444; padding: 0 4px 0 8px; }
.s2 { width: 113px; }
.s2 b { left: 53px; }
.e4 { margin: 0 9px 0 3px; }
.a2 { margin: 0 8px; }
.fontname { width: 81px; letter-spacing: -.2px; margin-right: 8px; }
.black { width: 20px; height: 20px; background: #000; margin: 0 4px 0 6px; }
.eject { margin: 4px 21px 0 auto; }

.context { height: 95px; flex: none; }
.context dl { margin: 1px 0 0 8px; }
.context dl div { display: flex; height: 25px; }
.context dt { font-weight: 700; width: 58px; letter-spacing: .1px; }
.context dd { margin: 0; }
.filters { flex: 1; }
.ftools { height: 31px; flex: none; border-bottom: 2px solid #a9c1d8; display: flex; align-items: center; padding: 0 0 1px 2px; }
.ftools em { border-left: 1px solid #8a8a8a; height: 24px; margin: 0 9px 0 9px; }
.ftools svg { margin-right: 9px; }
.tree { height: 329px; flex: none; background: #fff; border-bottom: 2px solid #8d8d92; }
.root { height: 22.500px; display: flex; align-items: center; gap: 9px; padding-left: 1px; }
.root.q { padding-left: 2px; gap: 10px; }
.node { height: 22.500px; display: flex; align-items: center; position: relative; padding-left: 10px; }
.node::before { content: ""; position: absolute; left: 10px; top: -7px; height: 100%; border-left: 1px dotted #777; }
.node.last::before { height: 18px; }
.node > i { width: 13px; height: 11px; margin-right: 5px; position: relative; }
.node > i::after { content: ""; position: absolute; left: 0; top: 5px; width: 13px; border-top: 1px dotted #777; }
.node > i.plus { width: 11px; margin: 0 12px 0 -5px; border: 1px solid #999; background: linear-gradient(#3c5ba9, #3c5ba9) center / 5px 1px no-repeat, linear-gradient(#3c5ba9, #3c5ba9) center / 1px 5px no-repeat, #fff; }
.node > i.plus::after { left: 11px; top: 4px; width: 7px; }
.node svg { margin-right: 13px; }
.queries { flex: 1; background: #fff; margin-top: -1px; }
.drag { font-style: italic; font-size: 13.6px; letter-spacing: .05px; }
.node.drag > i { margin-right: 3px; }
.node.drag svg { margin-right: 8px; }
.fbot { height: 48px; flex: none; display: flex; gap: 7px; justify-content: flex-end; align-items: flex-end; padding: 0 5px 6px 0; }
.fbot .btn { height: 29px; padding-right: 3px; }
.selbtn { width: 92px; gap: 6px; }
.filbtn { width: 84px; gap: 7px; }

.taskbar { height: 50px; background: #080808; display: flex; }
.app { width: 60px; display: grid; place-items: center; flex: none; padding-bottom: 1px; position: relative; }
.app:nth-child(4) { margin-left: 3px; }
.run1 { width: 62px; }
.run1::after { content: ""; position: absolute; left: 6px; right: 5px; bottom: 0; height: 3px; background: #a3d3f8; }
.act { background: #3a3a3a; width: 61px; margin: 0 0 0 1px; }
.app.run1.act::after { left: 0; right: 0; }
.gicon { width: 30px; height: 30px; background: #15181a; color: #e8e8e8; display: grid; place-items: center; }
.wd svg { margin-left: -3px; }
.tray { margin-left: auto; display: flex; align-items: center; color: #fff; font: 14.500px/23px "Open Sans", sans-serif; letter-spacing: -.4px; }
.ppl { margin-right: 1px; }
.chev { margin-left: 26px; }
.vol { margin-left: 12px; }
.bat { margin-left: 9px; }
.wifi { margin-left: 13px; }
.deu { margin-left: 14px; width: 28px; }
.clock { width: 72px; text-align: center; margin-left: 15px; }
.note { margin: 2px 0 0 22px; }
.tray em { height: 50px; border-left: 1px solid #666; margin: 0 5px 0 25px; }
```
